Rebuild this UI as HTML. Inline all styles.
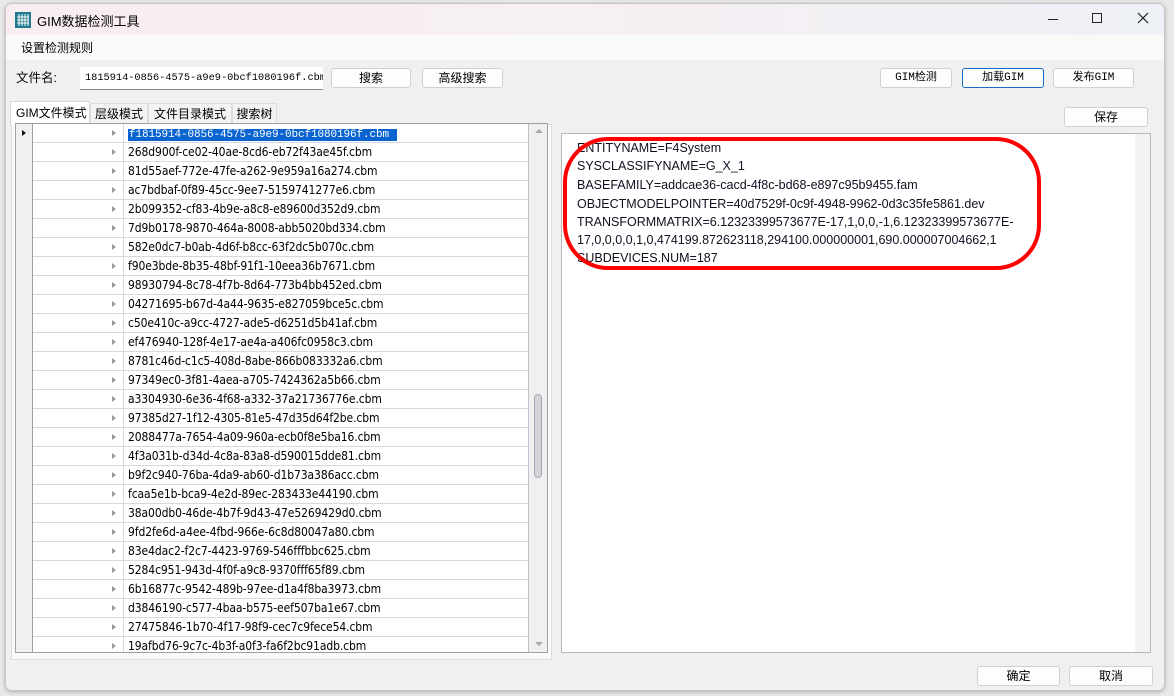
<!DOCTYPE html><html><head><meta charset="utf-8"><style>
*{margin:0;padding:0;box-sizing:border-box}
body{width:1174px;height:696px;background:#e9e9e9;position:relative;overflow:hidden;font-family:"Liberation Sans","Noto Sans CJK SC",sans-serif;font-size:12px;color:#000}
.win{position:absolute;left:5px;top:3px;width:1160px;height:688px;background:#f0f0f0;border:1px solid #c8c8c8;border-radius:7px;overflow:hidden;box-shadow:0 1px 4px rgba(0,0,0,.25)}
.title{position:absolute;left:0;top:0;width:100%;height:31px;background:linear-gradient(90deg,#f8eef1,#f5eff4 60%,#eef1f6)}
.menu{position:absolute;left:0;top:31px;width:100%;height:25px;background:#f9f9f9}
.a{position:absolute;white-space:nowrap}
.btn{position:absolute;height:20px;background:#fdfdfd;border:1px solid #d0d0d0;border-radius:3px;text-align:center;line-height:18px;font-size:12px}
.grid{position:absolute;left:15px;top:123px;width:533px;height:530px;background:#fff;border:1px solid #a0a0a0;overflow:hidden}
.row{position:absolute;left:0;width:512px;height:19px;border-bottom:1px solid #d8d8e0}
.rh{position:absolute;left:0;top:0;width:17px;height:19px;background:#f0f0f0;border-right:1px solid #a0a0a0}
.row .t{position:absolute;left:107px;top:0;width:405px;height:19px;border-left:1px solid #d8d8e0;padding-left:4px;line-height:19px;font-size:12px;font-family:"DejaVu Sans Condensed","Liberation Sans",sans-serif;letter-spacing:-0.1px}
.row .ar{position:absolute;left:96px;top:6px;width:0;height:0;border-left:4px solid #999;border-top:3.5px solid transparent;border-bottom:3.5px solid transparent}
.sb{position:absolute;left:512px;top:0;width:19px;height:530px;background:#f0f0f0;border-left:1px solid #c0c0c8}
.txt{position:absolute;left:561px;top:133px;width:590px;height:520px;background:#fff;border:1px solid #b8b8b8}
.txt .l{position:absolute;left:15px;font-size:12.5px;color:#101020;white-space:nowrap}
.tab{position:absolute;top:99px;height:22px;background:#f3f3f3;border:1px solid #ddd;font-size:12px;text-align:center;line-height:20px;overflow:hidden}
</style></head><body>
<div class="win">
<div class="title"></div>
<svg class="a" style="left:9px;top:8px" width="16" height="16"><rect width="16" height="16" fill="#1e7a8c"/><g stroke="#fff" stroke-width="1"><path d="M4 2v12M7 2v12M10 2v12M13 2v12M2 5h12M2 8h12M2 11h12"/></g></svg>
<div class="a" style="left:31px;top:7px;font-size:13px">GIM数据检测工具</div>
<div class="a" style="left:1042px;top:15px;width:10px;height:1px;background:#222"></div>
<div class="a" style="left:1086px;top:9px;width:10px;height:10px;border:1px solid #222"></div>
<svg class="a" style="left:1131px;top:8px" width="12" height="12"><path d="M1 1L11 11M11 1L1 11" stroke="#222" stroke-width="1.2"/></svg>
<div class="menu"></div>
<div class="a" style="left:15px;top:35px;font-size:12px">设置检测规则</div>
<div class="a" style="left:10px;top:63px;font-size:12.5px">文件名:</div>
<div class="a" style="left:74px;top:63px;width:243px;height:23px;background:#fff;border-bottom:1px solid #888;padding-left:5px;line-height:22px;font-family:'Liberation Mono',monospace;font-size:10.3px;overflow:hidden">1815914-0856-4575-a9e9-0bcf1080196f.cbm</div>
<div class="btn" style="left:325px;top:64px;width:80px">搜索</div>
<div class="btn" style="left:416px;top:64px;width:81px">高级搜索</div>
<div class="btn" style="left:874px;top:64px;width:72px;font-family:'Liberation Mono',monospace;font-size:11px">GIM检测</div>
<div class="btn" style="left:956px;top:64px;width:82px;border-color:#1a6fc4;font-family:'Liberation Mono',monospace;font-size:11px">加载GIM</div>
<div class="btn" style="left:1047px;top:64px;width:81px;font-family:'Liberation Mono',monospace;font-size:11px">发布GIM</div>
<div class="btn" style="left:1058px;top:103px;width:84px">保存</div>
<div class="a" style="left:5px;top:120px;width:541px;height:536px;background:#fafafa;border:1px solid #ddd"></div>
<div class="a" style="left:4px;top:97px;width:80px;height:24px;background:#fff;border:1px solid #d8d8d8;border-bottom:none;font-size:12px;padding-left:5px;line-height:22px;overflow:hidden">GIM文件模式</div>
<div class="tab" style="left:84px;width:58px">层级模式</div>
<div class="tab" style="left:142px;width:84px">文件目录模式</div>
<div class="tab" style="left:226px;width:45px">搜索树</div>
</div>
<div class="grid">
<div class="row" style="top:0"><div class="rh"><div class="a" style="left:6px;top:6px;border-left:4px solid #111;border-top:3.5px solid transparent;border-bottom:3.5px solid transparent"></div></div><div class="ar"></div><div class="t"><span style="background:#0a64d0;color:#fff;padding:0 8px 0 1px;font-family:'Liberation Mono',monospace;font-size:11px">f1815914-0856-4575-a9e9-0bcf1080196f.cbm</span></div></div>
<div class="row" style="top:19px"><div class="rh"></div><div class="ar"></div><div class="t">268d900f-ce02-40ae-8cd6-eb72f43ae45f.cbm</div></div>
<div class="row" style="top:38px"><div class="rh"></div><div class="ar"></div><div class="t">81d55aef-772e-47fe-a262-9e959a16a274.cbm</div></div>
<div class="row" style="top:57px"><div class="rh"></div><div class="ar"></div><div class="t">ac7bdbaf-0f89-45cc-9ee7-5159741277e6.cbm</div></div>
<div class="row" style="top:76px"><div class="rh"></div><div class="ar"></div><div class="t">2b099352-cf83-4b9e-a8c8-e89600d352d9.cbm</div></div>
<div class="row" style="top:95px"><div class="rh"></div><div class="ar"></div><div class="t">7d9b0178-9870-464a-8008-abb5020bd334.cbm</div></div>
<div class="row" style="top:114px"><div class="rh"></div><div class="ar"></div><div class="t">582e0dc7-b0ab-4d6f-b8cc-63f2dc5b070c.cbm</div></div>
<div class="row" style="top:133px"><div class="rh"></div><div class="ar"></div><div class="t">f90e3bde-8b35-48bf-91f1-10eea36b7671.cbm</div></div>
<div class="row" style="top:152px"><div class="rh"></div><div class="ar"></div><div class="t">98930794-8c78-4f7b-8d64-773b4bb452ed.cbm</div></div>
<div class="row" style="top:171px"><div class="rh"></div><div class="ar"></div><div class="t">04271695-b67d-4a44-9635-e827059bce5c.cbm</div></div>
<div class="row" style="top:190px"><div class="rh"></div><div class="ar"></div><div class="t">c50e410c-a9cc-4727-ade5-d6251d5b41af.cbm</div></div>
<div class="row" style="top:209px"><div class="rh"></div><div class="ar"></div><div class="t">ef476940-128f-4e17-ae4a-a406fc0958c3.cbm</div></div>
<div class="row" style="top:228px"><div class="rh"></div><div class="ar"></div><div class="t">8781c46d-c1c5-408d-8abe-866b083332a6.cbm</div></div>
<div class="row" style="top:247px"><div class="rh"></div><div class="ar"></div><div class="t">97349ec0-3f81-4aea-a705-7424362a5b66.cbm</div></div>
<div class="row" style="top:266px"><div class="rh"></div><div class="ar"></div><div class="t">a3304930-6e36-4f68-a332-37a21736776e.cbm</div></div>
<div class="row" style="top:285px"><div class="rh"></div><div class="ar"></div><div class="t">97385d27-1f12-4305-81e5-47d35d64f2be.cbm</div></div>
<div class="row" style="top:304px"><div class="rh"></div><div class="ar"></div><div class="t">2088477a-7654-4a09-960a-ecb0f8e5ba16.cbm</div></div>
<div class="row" style="top:323px"><div class="rh"></div><div class="ar"></div><div class="t">4f3a031b-d34d-4c8a-83a8-d590015dde81.cbm</div></div>
<div class="row" style="top:342px"><div class="rh"></div><div class="ar"></div><div class="t">b9f2c940-76ba-4da9-ab60-d1b73a386acc.cbm</div></div>
<div class="row" style="top:361px"><div class="rh"></div><div class="ar"></div><div class="t">fcaa5e1b-bca9-4e2d-89ec-283433e44190.cbm</div></div>
<div class="row" style="top:380px"><div class="rh"></div><div class="ar"></div><div class="t">38a00db0-46de-4b7f-9d43-47e5269429d0.cbm</div></div>
<div class="row" style="top:399px"><div class="rh"></div><div class="ar"></div><div class="t">9fd2fe6d-a4ee-4fbd-966e-6c8d80047a80.cbm</div></div>
<div class="row" style="top:418px"><div class="rh"></div><div class="ar"></div><div class="t">83e4dac2-f2c7-4423-9769-546fffbbc625.cbm</div></div>
<div class="row" style="top:437px"><div class="rh"></div><div class="ar"></div><div class="t">5284c951-943d-4f0f-a9c8-9370fff65f89.cbm</div></div>
<div class="row" style="top:456px"><div class="rh"></div><div class="ar"></div><div class="t">6b16877c-9542-489b-97ee-d1a4f8ba3973.cbm</div></div>
<div class="row" style="top:475px"><div class="rh"></div><div class="ar"></div><div class="t">d3846190-c577-4baa-b575-eef507ba1e67.cbm</div></div>
<div class="row" style="top:494px"><div class="rh"></div><div class="ar"></div><div class="t">27475846-1b70-4f17-98f9-cec7c9fece54.cbm</div></div>
<div class="row" style="top:513px"><div class="rh"></div><div class="ar"></div><div class="t">19afbd76-9c7c-4b3f-a0f3-fa6f2bc91adb.cbm</div></div>
<div class="sb"><div class="a" style="left:6px;top:5px;border-bottom:4px solid #aaa;border-left:4px solid transparent;border-right:4px solid transparent"></div><div class="a" style="left:5px;top:270px;width:8px;height:84px;background:#d4d4dc;border:1px solid #a8a8b4;border-radius:4px"></div><div class="a" style="left:6px;top:518px;border-top:4px solid #aaa;border-left:4px solid transparent;border-right:4px solid transparent"></div></div>
</div>
<div class="txt">
<div class="a" style="right:0;top:0;width:15px;height:518px;background:#f3f3f5"></div>
<div class="l" style="top:7px">ENTITYNAME=F4System</div>
<div class="l" style="top:25px">SYSCLASSIFYNAME=G_X_1</div>
<div class="l" style="top:44px">BASEFAMILY=addcae36-cacd-4f8c-bd68-e897c95b9455.fam</div>
<div class="l" style="top:63px">OBJECTMODELPOINTER=40d7529f-0c9f-4948-9962-0d3c35fe5861.dev</div>
<div class="l" style="top:81px">TRANSFORMMATRIX=6.12323399573677E-17,1,0,0,-1,6.12323399573677E-</div>
<div class="l" style="top:99px">17,0,0,0,0,1,0,474199.872623118,294100.000000001,690.000007004662,1</div>
<div class="l" style="top:117px">SUBDEVICES.NUM=187</div>
</div>
<div class="a" style="left:563px;top:137px;width:478px;height:133px;border:4.5px solid #f00;border-radius:45px"></div>
<div class="btn" style="left:977px;top:666px;width:83px;height:20px">确定</div>
<div class="btn" style="left:1069px;top:666px;width:84px;height:20px">取消</div>
</body></html>
